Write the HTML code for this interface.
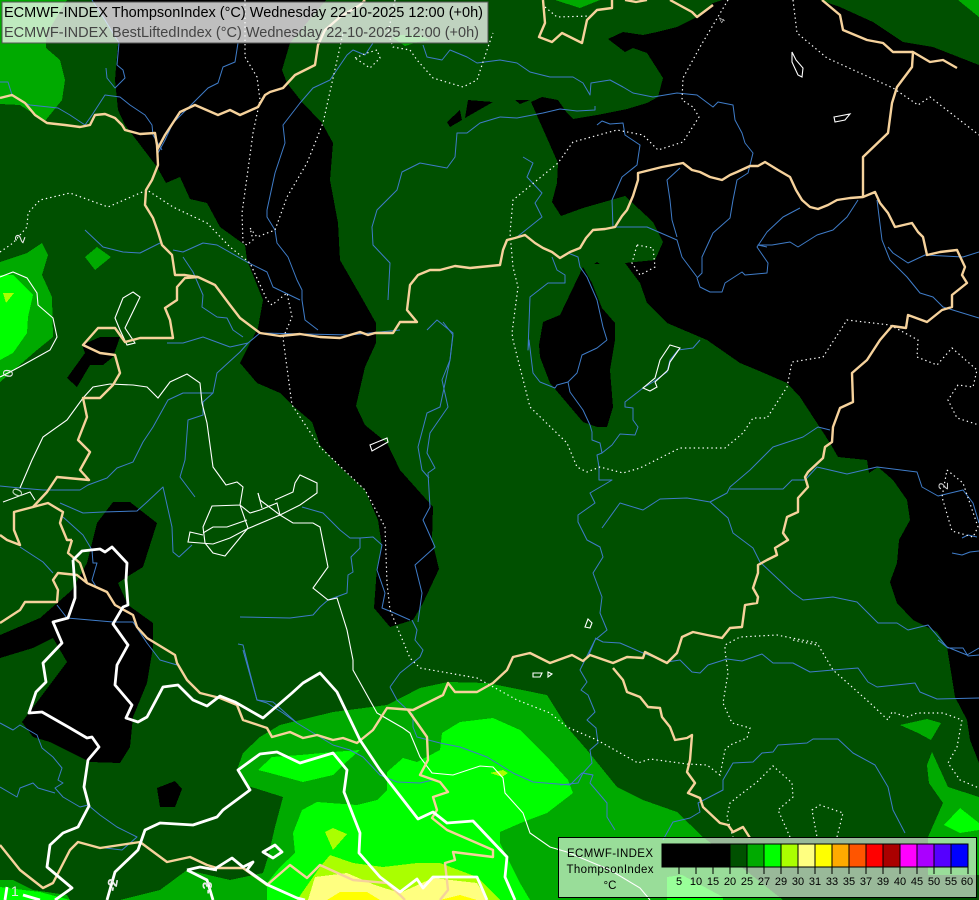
<!DOCTYPE html>
<html><head><meta charset="utf-8"><style>
html,body{margin:0;padding:0;background:#005000;width:979px;height:900px;overflow:hidden}
svg{display:block;position:absolute;left:0;top:0}
text{font-family:"Liberation Sans",sans-serif}
.riv{fill:none;stroke:#3f7cc8;stroke-width:1;stroke-linejoin:round}
.dot{fill:none;stroke:#fff;stroke-width:1.2;stroke-dasharray:1.4 3}
.thin{fill:none;stroke:#fff;stroke-width:1.1}
.bor{fill:none;stroke:#f6d29c;stroke-width:2.4;stroke-linejoin:round}
.thick{fill:none;stroke:#fff;stroke-width:2.8;stroke-linejoin:round}
</style></head><body>
<svg width="979" height="900" viewBox="0 0 979 900" xmlns="http://www.w3.org/2000/svg">
<g shape-rendering="crispEdges">
<rect width="979" height="900" fill="#005000"/>
<g fill="#00aa00">
<polygon points="0,0 67,0 46,35 46,48 60,60 65,80 62,100 45,121 20,105 0,104"/>
<polygon points="0,262 27,253 42,243 48,255 42,275 52,297 53,337 37,350 0,382"/>
<polygon points="85,257 97,247 111,257 95,270"/>
<polygon points="555,0 580,8 600,0"/>
<polygon points="393,38 405,46 418,42 430,40 420,35 400,35"/>
<polygon points="958,0 979,17 979,0"/>
<polygon points="0,880 13,880 33,890 67,895 70,900 0,900"/>
<polygon points="900,725 927,719 941,723 931,740 918,733"/>
<polygon points="932,752 927,765 929,783 943,803 928,837 928,875 979,875 979,797 948,787"/>
<polygon points="160,890 187,870 230,880 263,873 268,857 275,827 283,797 245,785 237,770 243,753 260,737 280,725 333,712 387,705 420,688 448,682 487,683 547,695 567,727 587,750 617,787 643,800 677,812 703,837 720,850 783,900 120,900"/>
</g>
<g fill="#00ff00">
<polygon points="0,275 13,275 33,295 28,317 27,333 13,353 0,360"/>
<polygon points="258,770 272,757 300,755 333,752 360,750 343,765 333,775 303,782 270,773"/>
<polygon points="387,772 403,758 417,762 440,750 442,733 460,722 493,718 520,730 550,760 568,780 573,793 547,813 523,822 500,832 500,843 520,883 530,900 267,900 267,883 280,867 295,853 293,833 302,810 317,802 357,805 377,800 387,790"/>
<polygon points="960,808 979,823 979,830 960,833 944,825"/>
<polygon points="667,877 682,875 723,897 723,900 667,900"/>
<polygon points="0,887 40,892 70,900 0,900"/>
</g>
<g fill="#aaff00">
<polygon points="3,293 14,293 6,303"/>
<polygon points="325,832 333,828 347,834 333,850"/>
<polygon points="490,773 503,770 508,773 502,777"/>
<polygon points="297,900 320,867 330,855 353,863 383,867 417,863 440,863 477,877 500,900"/>
</g>
<polygon fill="#ffff80" points="308,900 315,877 347,873 375,885 400,893 433,878 477,883 487,900"/>
<g fill="#ffff00">
<polygon points="327,900 340,892 367,892 380,900"/>
<polygon points="440,900 460,895 477,900"/>
</g>
<g fill="#000">
<polygon points="92,0 326,0 290,43 282,70 287,83 302,102 322,123 333,143 330,180 338,223 340,260 363,300 376,323 376,343 365,367 356,406 365,425 387,443 400,470 433,507 432,540 439,569 423,603 413,620 390,627 374,608 377,567 382,547 378,520 365,490 340,467 320,445 312,422 292,405 280,393 257,383 240,363 250,343 258,328 263,300 247,260 245,245 220,227 207,203 190,199 180,177 166,183 157,167 125,125 118,110 115,80 118,43 105,20"/>
<polygon points="722,0 713,3 697,17 677,27 657,32 643,35 623,32 608,39 625,52 633,48 647,53 663,78 658,97 647,103 627,109 597,115 573,119 567,113 558,100 542,97 531,102 558,163 557,183 552,202 561,216 583,208 625,196 653,222 663,242 655,260 625,263 640,283 647,303 667,323 707,340 740,363 757,370 787,383 800,397 830,443 838,457 867,460 869,473 878,467 893,480 907,500 910,520 899,540 897,563 890,582 897,603 913,620 937,632 947,647 955,697 967,720 970,740 979,763 979,65 933,47 903,42 873,22 840,7 820,0"/>
<polygon points="583,267 592,283 602,308 615,323 615,340 610,370 613,407 607,427 597,427 583,422 550,383 540,357 539,345 543,322 560,315"/>
<polygon points="597,262 600,264 594,264"/>
<polygon points="447,122 460,110 462,120 450,127"/>
<polygon points="465,118 468,100 493,102"/>
<polygon points="515,100 530,100 520,104"/>
<polygon points="97,523 113,502 130,502 157,523 143,567 130,575 118,583 128,605 153,623 153,647 147,683 133,717 130,747 120,763 90,762 50,742 33,737 22,722 67,662 53,638 33,648 0,658 0,635 40,618 72,590 87,563"/>
<polygon points="157,788 175,781 182,789 175,807 160,807"/>
<polygon points="67,378 85,353 82,345 100,337 120,337 113,357 103,365 90,365 77,387"/>
</g>
</g>
<g class="riv">
<polyline points="0,82 8,82 12,95 25,103 30,105 58,108 70,115 85,125 92,115 105,95 120,97 130,105 145,115 152,125 153,135 162,150"/>
<polyline points="106,68 107,78 115,88 125,78 123,70 117,65 119,43 105,20 92,0"/>
<polyline points="238,43 235,62 223,67 218,83 208,88 193,103 173,123 165,140 158,153"/>
<polyline points="373,43 365,55 353,50 347,55 330,80 313,88 300,103 283,125 285,143 275,173 267,210 267,217 275,230 277,243 288,257 297,280 302,290 302,300 305,320 318,330"/>
<polyline points="500,117 480,123 467,133 457,133 455,157 447,168 420,163 402,172 397,190 377,210 372,227 373,245 390,263 388,300"/>
<polyline points="423,45 427,57 442,60 450,50 467,57 477,63 500,60 517,63 530,72 550,77 573,77 583,83 590,95 591,83 610,80 623,87 633,93 653,97 677,93 697,95 713,107 718,102 733,105 735,120 742,133 745,143 753,153 748,173 737,180 733,200 730,218 713,233 702,257 702,273 697,278 700,287 710,292 722,292 725,283 742,272 745,275 767,273 768,263 757,247 767,232 783,217 800,208"/>
<polyline points="500,117 517,118 543,113 560,109 577,111 595,110 595,106"/>
<polyline points="597,125 602,121 610,124 623,123 625,135 640,145 637,165 622,177 612,200 613,227 647,227 677,240 682,257 697,277"/>
<polyline points="523,157 533,163 527,177 542,193 535,203 542,217 517,237"/>
<polyline points="680,168 667,180 670,200 672,220 677,237"/>
<polyline points="767,247 758,245 772,245 790,242 798,247 817,235 833,230 847,217 858,200"/>
<polyline points="877,200 882,240 890,260 907,277 920,293 933,297 943,307 979,318"/>
<polyline points="888,247 893,253 908,263 925,255 963,257 979,252"/>
<polyline points="552,257 557,270 565,275 565,283 548,283 530,297 528,350 529,340 533,373 540,382 555,388 557,385 568,382 577,373 582,355 597,348 607,340"/>
<polyline points="568,253 578,257 580,267 587,277 597,300 603,327 607,340"/>
<polyline points="568,382 570,392 583,410 590,425 592,432 592,440 600,443 602,453 597,455 599,467 599,480 612,480 607,483 590,493 595,503 578,515 578,522 587,540 600,547 603,557 593,573 602,597 600,613 607,630 595,640 588,657"/>
<polyline points="700,340 693,348 678,350 670,360 667,372 653,382 643,388 625,402 625,407 633,408 633,420 638,427 635,435 620,434 612,445 602,453"/>
<polyline points="602,528 620,503 643,510 660,499 687,498 710,502 727,493 730,487 750,470 773,447 803,437 818,427 830,430"/>
<polyline points="730,489 783,489 792,480 805,480 817,467 847,474 877,467 917,472 922,487 938,496 963,490 973,503 979,523"/>
<polyline points="710,502 728,518 733,533 753,548 760,562 777,578 793,593 803,600 833,597 857,602 878,623 897,623 908,630 928,625 947,647 967,655 979,648"/>
<polyline points="595,638 603,642 620,643 643,653 667,662 680,660 692,672 700,673 708,665 727,659 742,661 762,654 773,663 793,663 810,672 833,670 858,668 868,682 877,687 915,683 920,692 937,699 979,698"/>
<polyline points="595,640 580,670 587,682 581,690 588,695 595,712 587,720 596,728 598,743 590,750 592,763 583,773 578,783 560,785"/>
<polyline points="583,773 593,775 590,783 607,803 607,817 615,830"/>
<polyline points="663,840 673,822 690,818 700,812 698,803 723,790 723,780 733,763 753,762 762,753 773,752 778,745 807,743 813,739 838,739 853,753 875,765 888,787 893,810 905,833"/>
<polyline points="938,640 948,648 963,648 968,656 979,655"/>
<polyline points="952,553 962,555 970,552 979,551"/>
<polyline points="962,538 968,535 977,537"/>
<polyline points="333,745 350,750 363,757 380,775 397,782 420,783 433,780"/>
<polyline points="440,743 460,747 487,757 513,773 533,782 570,785 582,773 593,775"/>
<polyline points="390,687 397,700 413,715 413,727 417,737 440,743"/>
<polyline points="390,687 400,673 420,657 423,650 415,640 417,630 412,620"/>
<polyline points="243,650 257,700 273,702 297,723 333,745"/>
<polyline points="85,230 103,247 123,252 140,253 160,243"/>
<polyline points="173,250 183,252 203,243 217,245 247,262 267,272 273,287 300,300"/>
<polyline points="183,257 193,272 203,295 202,307 217,317 227,318 233,330 243,337"/>
<polyline points="167,343 183,343 203,337 230,347 248,343 260,333 350,335 400,330"/>
<polyline points="248,343 240,352 217,373 213,393 203,402 203,415 188,420 185,460 180,477 195,497"/>
<polyline points="213,393 183,393 168,400 153,427 143,442 133,462 117,468 107,478 88,485 80,490 43,490 20,488 0,486"/>
<polyline points="60,503 83,513 103,512 137,511 147,502 163,487 172,527 173,552 179,557 192,545"/>
<polyline points="63,517 83,535 92,550 93,563 97,563 92,580 97,588"/>
<polyline points="20,547 43,562 53,573"/>
<polyline points="57,605 67,618 113,622 133,622 147,643 160,660 177,665"/>
<polyline points="0,723 13,730 20,725 37,735 42,748 53,757 62,768 58,780 63,783 55,788 63,797 80,807 88,805 100,815 117,827 137,837 122,850 97,847 78,842"/>
<polyline points="0,787 17,797 20,788 33,783 38,788 55,793"/>
<polyline points="240,617 290,618 313,615 320,607 328,600 347,593 348,575 353,572 351,557 360,548 360,538 373,537 382,545 377,570 385,593 382,608 392,612 410,620"/>
<polyline points="238,644 243,645 250,673 257,700 267,703 283,713 297,723"/>
<polyline points="302,507 323,513 340,530 350,538 360,538"/>
<polyline points="427,330 437,320 453,333 450,360 442,380 448,407 430,433 427,453 435,468 428,473 430,507 423,520 435,547 415,565 422,593 418,622"/>
<polyline points="443,322 453,335 450,360 443,393 440,407 427,413 418,447 422,470 429,478"/>
</g>
<g class="dot">
<polyline points="0,252 13,243 27,227 28,213 40,200 70,193 108,207 147,190 173,207 207,223 230,247 250,263 267,300 272,305 287,293 292,317 283,338 292,405 320,447 365,490 385,527 387,583 390,610 410,658 420,668 477,678 517,700 550,713 567,727 597,740 638,763 650,759 687,764 707,765 720,775 725,750 730,745 747,738 750,728 732,723 723,703 728,673 725,650 725,645 740,637 777,635 817,643 833,670 870,703 888,720 892,712 907,717 917,713 943,713 962,720 957,747 948,763 960,780 979,788"/>
<polyline points="793,640 817,645"/>
<polyline points="790,837 778,810 793,797 792,783 773,766 757,782 740,795 730,803 727,817 733,837"/>
<polyline points="837,837 843,813 820,805 812,810 817,837"/>
<polyline points="245,0 245,57 257,77 260,100 253,133 247,177 242,213 243,243 247,245 253,240 250,228 257,237 275,230 287,197 307,163 323,123 340,47 343,33"/>
<polyline points="395,0 388,33 393,47 410,50 417,60 433,78 463,87 477,80 488,47 493,33"/>
<polyline points="355,58 367,53 377,50 380,58 370,68 355,58"/>
<polyline points="728,0 700,47 683,78 682,100 693,107 699,117 683,142 658,150 643,135 617,130 573,142 558,163 513,200 510,233 513,267 518,287 512,333 513,340 530,407 567,443 577,467 587,472 600,467 623,473 640,468 680,448 725,448 743,433 753,418 767,418 787,387 792,362 823,357 847,320 890,325 918,340 917,357 937,365 952,348 977,370 973,387 958,385 948,400 957,418 979,425"/>
<polyline points="947,470 963,483 978,527 973,537 952,531 942,497 947,470"/>
<polyline points="793,0 797,33 827,58 893,88 918,105 930,97 979,135"/>
<polyline points="637,245 653,248 655,267 640,275 632,263 637,245"/>
<polyline points="545,7 557,17 590,16"/>
</g>
<g class="thin">
<polyline points="0,277 13,272 27,278 37,293 38,305 53,318 57,337 50,350 23,365 10,372 0,377"/>
<polygon points="133,292 140,297 125,328 135,343 127,345 120,330 115,318 123,298"/>
<polyline points="3,502 30,492 35,500"/>
<polyline points="20,488 32,460 43,437 67,420 83,398 93,387 110,384 133,385 147,387 158,398 170,382 187,374 200,383 202,403 207,423 213,467 226,485 237,482 243,487 240,505 212,506 203,527 205,543 213,553 225,556 248,528 240,505"/>
<polyline points="203,533 213,527 227,527 247,520"/>
<polyline points="203,535 190,532 188,542 213,544 230,538 247,529 280,515 293,523 313,523 320,527 328,567 313,588 328,600 337,598 347,630 353,660 353,670 377,713 403,728 410,733 420,757 432,773 453,775 480,766 493,767 503,778 505,793 523,813 530,833 550,847 567,852 610,870 640,888 650,900"/>
<polyline points="240,505 250,513 260,510 277,503 280,515"/>
<polyline points="275,500 293,492 295,483 300,475 317,483 317,493 300,505 280,515"/>
<polyline points="258,493 260,500 280,515"/>
<polyline points="258,493 262,508"/>
<polygon points="370,445 387,438 388,442 372,451"/>
<polygon points="792,52 792,62 798,75 802,77 803,68 796,60"/>
<polygon points="834,117 850,114 845,120 835,122"/>
<polygon points="670,345 680,348 670,362 668,370 655,382 657,387 650,391 643,388 655,378 660,360"/>
<polygon points="588,619 592,623 590,628 585,627"/>
<polygon points="533,673 542,673 540,677 533,677"/>
<polygon points="548,672 552,674 548,677"/>
</g>
<g class="bor">
<polyline points="0,98 12,95 25,103 35,115 47,123 65,125 80,127 90,125 95,115 105,114 115,118 122,125 125,130 140,134 155,133 157,145 158,165 152,180 146,190 145,205 153,218 158,232 162,245 172,255 175,275 185,275 198,277 215,285 230,305 240,318 260,333 280,336 300,334 320,337 340,338 350,335 360,332 368,335 375,333 393,333 400,322 417,322 407,310 410,285 418,275 430,270 440,270 455,266 470,268 500,265 503,250 507,240 515,238 525,235 535,243 543,248 552,252 560,258 570,252 580,248 586,238 593,230 605,229 615,227 622,216 627,210 633,196 638,180 638,173 650,170 662,167 683,163 692,170 700,172 710,177 722,180 730,175 737,172 750,166 758,166 765,162 778,170 790,177 796,190 802,200 810,207 818,209 828,205 837,200 850,198 863,197 875,192 880,203 888,213 895,227 912,223 918,232 923,237 927,255 940,252 957,250 965,267 962,275 967,283 952,295 952,307 942,310 927,322 908,315 906,328 892,326 880,340 867,360 852,373 853,402 840,408 833,427 832,442 825,447 823,458 808,472 805,477 808,487 798,498 798,512 787,517 783,533 788,540 775,548 777,555 767,560 758,565 758,573 753,588 758,597 757,603 745,605 742,627 730,628 722,638 707,635 693,632 682,637 677,653 667,663 645,652 643,658 627,657 613,663 590,655 583,661 572,655 550,663 530,653 513,657 507,670 493,683 477,692 455,692 448,683 443,695 413,710 387,708 373,730 357,743 343,738 333,740 317,735 303,738 290,732 272,737 267,728 243,720 237,705 220,698 200,693 187,680 177,663 175,655 147,638 137,627 133,615 115,605 107,592 87,583 80,563 68,553 72,540"/>
<polyline points="157,150 165,135 180,112 195,105 218,115 230,110 240,115 258,107 265,95 270,92 283,88 295,75 315,65 318,45 325,30 340,17 360,5 365,0"/>
<polyline points="198,277 185,278 177,287 177,300 165,308 170,320 173,338 140,338 125,342 115,328 98,328 83,345 100,353 115,355 120,373 113,385 100,398 83,398 87,417 78,440 90,452 80,470 89,480 57,477 47,492 33,507 14,512 14,530 20,545 7,540 0,535"/>
<polyline points="72,540 67,540 60,523 63,512 48,503 33,507"/>
<polyline points="0,623 20,610 25,602 57,602 58,590 53,580 58,573 77,575 87,583"/>
<polyline points="0,845 20,870 43,888 53,883 70,850 78,842 100,848 140,842 167,862 190,857 207,865 217,868 243,868 267,885 290,865 307,878 320,865 353,880 387,883 400,895 405,900"/>
<polyline points="408,710 427,737 428,760 420,775 440,782 448,792 433,797 437,810 432,818 447,830 470,840 493,850 493,857 453,852 455,860 445,863 448,890 440,900"/>
<polyline points="863,197 863,157 888,133 892,103 897,87 912,67 913,52 930,62 943,60 957,68"/>
<polyline points="913,52 893,52 883,43 867,40 843,30 840,15 822,0"/>
<polyline points="613,668 623,680 627,692 640,697 648,707 660,708 662,717 670,727 675,740 687,738 692,735 690,760 687,772 695,783 688,793 700,798 703,807 720,823 728,825 733,832 743,827 750,838"/>
<polyline points="543,0 545,23 539,37 552,42 562,33 582,43 587,20 597,10 612,8 612,0"/>
<polyline points="670,0 692,12 697,17 713,5"/>
<polyline points="625,0 636,2 647,0"/>
</g>
<g class="thick">
<polyline points="73,560 82,551 100,549 105,552 112,547 127,563 126,580 128,605 123,607 113,624 128,645 117,665 115,685 132,705 126,718 138,722 147,717 163,687 178,685 193,700 207,706 220,696 235,702 263,718 292,693 303,683 320,673 337,692 360,740 380,770 418,819 433,812 447,823 473,821 507,857 505,877 515,900"/>
<polyline points="73,560 75,587 75,598 68,618 53,622 62,643 43,663 46,682 36,692 29,713 42,712 70,728 87,738 92,737 99,747 88,760 84,787 89,806 78,827 63,833 50,845 47,867 72,888 55,900"/>
<polyline points="107,900 115,872 138,850 145,830 160,823 193,825 217,817 223,810 250,790 238,770 260,754 277,752 300,763 333,753 347,770 344,792 360,833 359,853 380,877 400,892 417,879 423,888 433,877 477,877 487,900"/>
<polyline points="187,870 207,880 213,900"/>
<polyline points="213,870 232,858 243,867 253,862 247,870 268,885 297,898 305,900"/>
<polyline points="187,870 200,867 217,870"/>
<polygon points="263,852 275,845 282,852 273,858"/>
<polyline points="7,887 5,900"/>
<polyline points="23,895 40,900"/>
</g>
<g fill="#fff" font-size="14">
<text transform="translate(23,244) rotate(-70)" fill="#e8e8e8">2</text>
<text transform="translate(12,378) rotate(-80)" fill="#e8e8e8">0</text>
<text transform="translate(20,498) rotate(-65)" fill="#bfd8bf">0</text>
<text transform="translate(948,490) rotate(-90)" fill="#ccc">2</text>
<text transform="translate(116,892) rotate(-80)" font-weight="bold" fill="#e8e8e8">-2</text>
<text transform="translate(212,894) rotate(-90)" fill="#e8e8e8" font-weight="bold">-3</text>
<text transform="translate(11,896)" fill="#e8e8e8">1</text>
<text transform="translate(723,24) rotate(-60)" fill="#bbb" font-size="9">4</text>
</g>
<rect x="2" y="2" width="486" height="41" fill="#fff" fill-opacity="0.75" stroke="#555" stroke-width="1" shape-rendering="crispEdges"/>
<text x="4" y="17" font-size="15" fill="#000" textLength="479" lengthAdjust="spacingAndGlyphs">ECMWF-INDEX ThompsonIndex (°C) Wednesday 22-10-2025 12:00 (+0h)</text>
<text x="4" y="37" font-size="15" fill="#444" textLength="475" lengthAdjust="spacingAndGlyphs">ECMWF-INDEX BestLiftedIndex (°C) Wednesday 22-10-2025 12:00 (+0h)</text>
<rect x="558.5" y="837.5" width="418" height="60" fill="#fff" fill-opacity="0.6" stroke="#000" stroke-width="1" shape-rendering="crispEdges"/>
<text x="610" y="857" font-size="11.5" text-anchor="middle" fill="#000" textLength="86">ECMWF-INDEX</text>
<text x="610" y="873" font-size="11.5" text-anchor="middle" fill="#000" textLength="87">ThompsonIndex</text>
<text x="610" y="889" font-size="11.5" text-anchor="middle" fill="#000">°C</text>
<g shape-rendering="crispEdges" stroke="#000" stroke-width="1">
<rect x="662" y="844" width="17" height="23" fill="#000"/>
<rect x="679" y="844" width="17" height="23" fill="#000"/>
<rect x="696" y="844" width="17" height="23" fill="#000"/>
<rect x="713" y="844" width="17" height="23" fill="#000"/>
<rect x="730" y="844" width="17" height="23" fill="#005000"/>
<rect x="747" y="844" width="17" height="23" fill="#00aa00"/>
<rect x="764" y="844" width="17" height="23" fill="#00ff00"/>
<rect x="781" y="844" width="17" height="23" fill="#aaff00"/>
<rect x="798" y="844" width="17" height="23" fill="#ffff80"/>
<rect x="815" y="844" width="17" height="23" fill="#ffff00"/>
<rect x="832" y="844" width="17" height="23" fill="#ffaa00"/>
<rect x="849" y="844" width="17" height="23" fill="#ff5500"/>
<rect x="866" y="844" width="17" height="23" fill="#ff0000"/>
<rect x="883" y="844" width="17" height="23" fill="#aa0000"/>
<rect x="900" y="844" width="17" height="23" fill="#ff00ff"/>
<rect x="917" y="844" width="17" height="23" fill="#aa00ff"/>
<rect x="934" y="844" width="17" height="23" fill="#5500ff"/>
<rect x="951" y="844" width="17" height="23" fill="#0000ff"/>
<path fill="none" d="M679 867V874M696 867V874M713 867V874M730 867V874M747 867V874M764 867V874M781 867V874M798 867V874M815 867V874M832 867V874M849 867V874M866 867V874M883 867V874M900 867V874M917 867V874M934 867V874M951 867V874M968 867V874"/>
</g>
<g font-size="11" fill="#000" text-anchor="middle">
<text x="679" y="885">5</text><text x="696" y="885">10</text><text x="713" y="885">15</text><text x="730" y="885">20</text>
<text x="747" y="885">25</text><text x="764" y="885">27</text><text x="781" y="885">29</text><text x="798" y="885">30</text>
<text x="815" y="885">31</text><text x="832" y="885">33</text><text x="849" y="885">35</text><text x="866" y="885">37</text>
<text x="883" y="885">39</text><text x="900" y="885">40</text><text x="917" y="885">45</text><text x="934" y="885">50</text>
<text x="951" y="885">55</text><text x="967" y="885">60</text>
</g>
</svg>
</body></html>
